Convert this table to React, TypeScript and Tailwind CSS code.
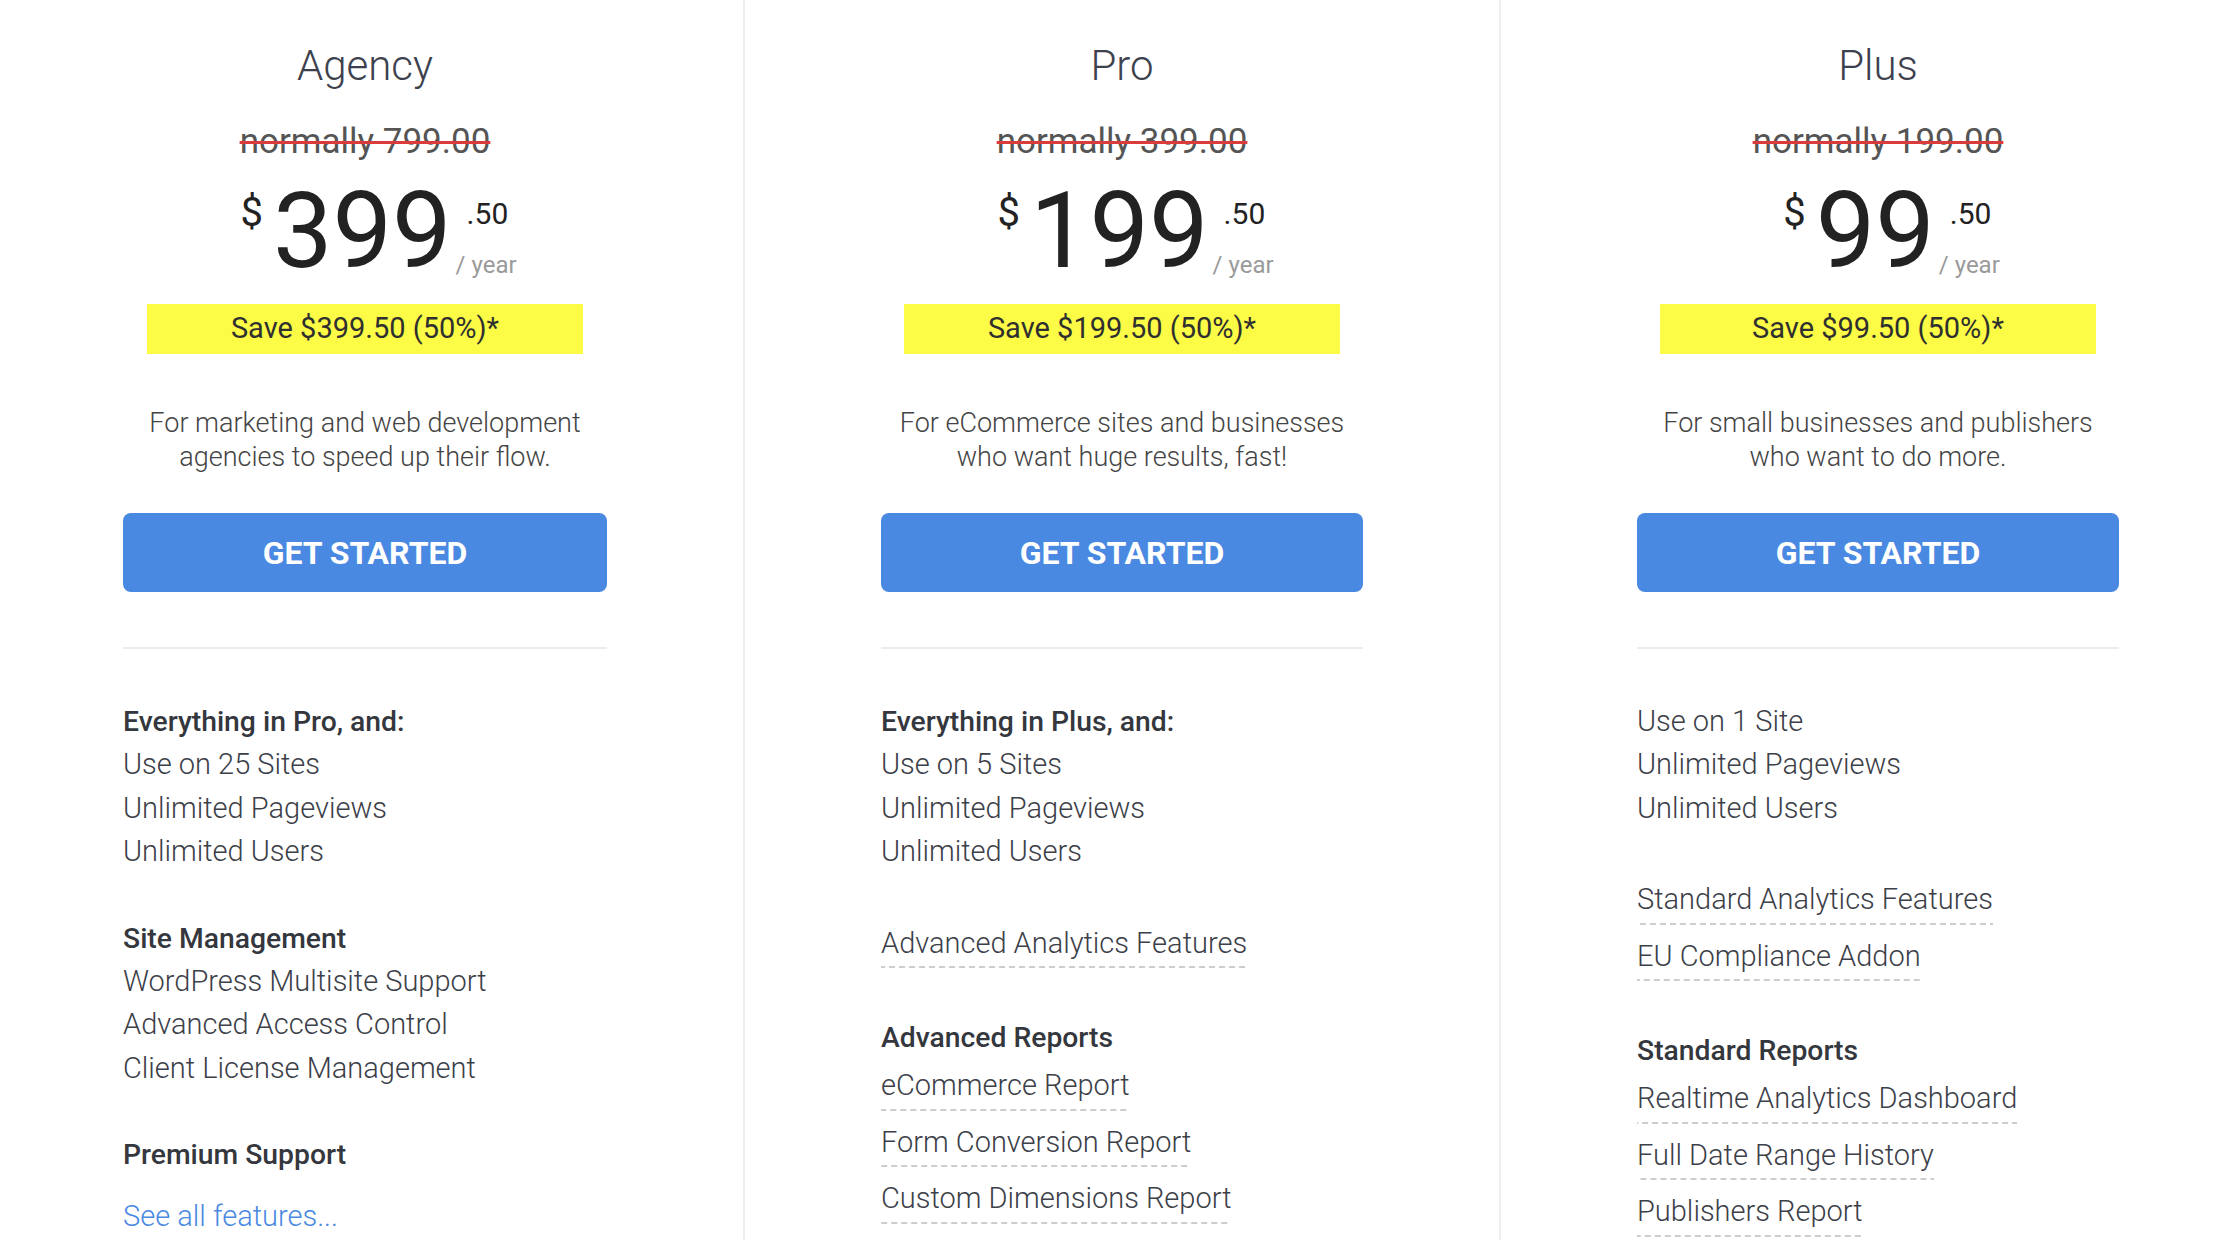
type Line = { text: string; kind: 'head' | 'item' | 'dash' }

type Plan = {
  name: string
  normally: string
  dollars: string
  save: string
  blurb: string[]
  groups: Line[][]
  more?: string
}

const head = (text: string): Line => ({ text, kind: 'head' })
const item = (text: string): Line => ({ text, kind: 'item' })
const dash = (text: string): Line => ({ text, kind: 'dash' })

const plans: Plan[] = [
  {
    name: 'Agency',
    normally: 'normally 799.00',
    dollars: '399',
    save: 'Save $399.50 (50%)*',
    blurb: ['For marketing and web development', 'agencies to speed up their flow.'],
    groups: [
      [head('Everything in Pro, and:'), item('Use on 25 Sites'), item('Unlimited Pageviews'), item('Unlimited Users')],
      [
        head('Site Management'),
        item('WordPress Multisite Support'),
        item('Advanced Access Control'),
        item('Client License Management'),
      ],
      [head('Premium Support')],
    ],
    more: 'See all features...',
  },
  {
    name: 'Pro',
    normally: 'normally 399.00',
    dollars: '199',
    save: 'Save $199.50 (50%)*',
    blurb: ['For eCommerce sites and businesses', 'who want huge results, fast!'],
    groups: [
      [head('Everything in Plus, and:'), item('Use on 5 Sites'), item('Unlimited Pageviews'), item('Unlimited Users')],
      [dash('Advanced Analytics Features')],
      [
        head('Advanced Reports'),
        dash('eCommerce Report'),
        dash('Form Conversion Report'),
        dash('Custom Dimensions Report'),
      ],
    ],
  },
  {
    name: 'Plus',
    normally: 'normally 199.00',
    dollars: '99',
    save: 'Save $99.50 (50%)*',
    blurb: ['For small businesses and publishers', 'who want to do more.'],
    groups: [
      [item('Use on 1 Site'), item('Unlimited Pageviews'), item('Unlimited Users')],
      [dash('Standard Analytics Features'), dash('EU Compliance Addon')],
      [
        head('Standard Reports'),
        dash('Realtime Analytics Dashboard'),
        dash('Full Date Range History'),
        dash('Publishers Report'),
      ],
    ],
  },
]

function FeatureLine({ line }: { line: Line }) {
  if (line.kind === 'head') {
    return <div className="h-[43.4px] leading-[43.4px] text-[28.3px] font-medium text-[#34373d]">{line.text}</div>
  }
  if (line.kind === 'dash') {
    return (
      <div className="flex py-[5px]">
        <span className="h-[46.4px] leading-[43.4px] pb-[3px] text-[29px] font-light text-[#3c4048] bg-[linear-gradient(to_right,#cdcdcd_60%,transparent_60%)] bg-[length:10px_2px] bg-bottom bg-repeat-x">
          {line.text}
        </span>
      </div>
    )
  }
  return <div className="h-[43.4px] leading-[43.4px] text-[29px] font-light text-[#3c4048]">{line.text}</div>
}

function PlanColumn({ plan, first }: { plan: Plan; first?: boolean }) {
  return (
    <div
      className={
        'w-[756px] shrink-0 px-[136px] pb-[40px] flex flex-col items-center ' +
        (first ? '' : 'border-l-2 border-[#efefef]')
      }
    >
      <h2 className="mt-[42px] h-[48px] text-[42px] leading-[48px] font-light text-[#3d414d]">{plan.name}</h2>

      <div className="mt-[32px] h-[40px] text-[35px] leading-[40px] text-[#555555] line-through decoration-[#dc3b3b] decoration-3">
        {plan.normally}
      </div>

      <div className="mt-[17px] ml-[27px] flex items-start h-[104px]">
        <span className="mt-[14px] mr-[10px] text-[40px] leading-[40px] text-[#222222]">$</span>
        <span className="text-[106px] leading-[104px] text-[#222222]">{plan.dollars}</span>
        <div className="ml-[4px] flex flex-col items-start">
          <span className="ml-[11px] mt-[20px] text-[30px] leading-[30px] text-[#222222]">.50</span>
          <span className="mt-[24px] text-[24px] leading-[24px] text-[#9a9a9a]">/ year</span>
        </div>
      </div>

      <div className="mt-[21px] w-[436px] h-[50px] flex items-center justify-center bg-[#fcfc46] text-[29px] text-[#2f2f2f]">
        {plan.save}
      </div>

      <p className="mt-[52px] h-[68px] text-center text-[27px] leading-[34px] font-light text-[#444444]">
        {plan.blurb.map((l) => (
          <span key={l} className="block">
            {l}
          </span>
        ))}
      </p>

      <button className="mt-[39px] w-full h-[79px] rounded-[8px] bg-[#4a89e2] text-white text-[32px] font-bold">
        GET STARTED
      </button>

      <div className="mt-[55px] w-full h-[2px] bg-[#ececec]" />

      <div className="mt-[51px] w-full flex flex-col gap-[43px]">
        {plan.groups.map((g, i) => (
          <div key={i} className="flex flex-col">
            {g.map((line) => (
              <FeatureLine key={line.text} line={line} />
            ))}
          </div>
        ))}
      </div>
      {plan.more && (
        <a className="self-start mt-[18px] text-[29px] leading-[43.4px] font-light text-[#4a89e2]">{plan.more}</a>
      )}
    </div>
  )
}

export default function App() {
  return (
    <div className="w-[2228px] h-[1240px] overflow-hidden bg-white font-[Roboto,sans-serif]">
      <div className="flex -ml-[13px] min-h-full">
        {plans.map((p, i) => (
          <PlanColumn key={p.name} plan={p} first={i === 0} />
        ))}
      </div>
    </div>
  )
}
